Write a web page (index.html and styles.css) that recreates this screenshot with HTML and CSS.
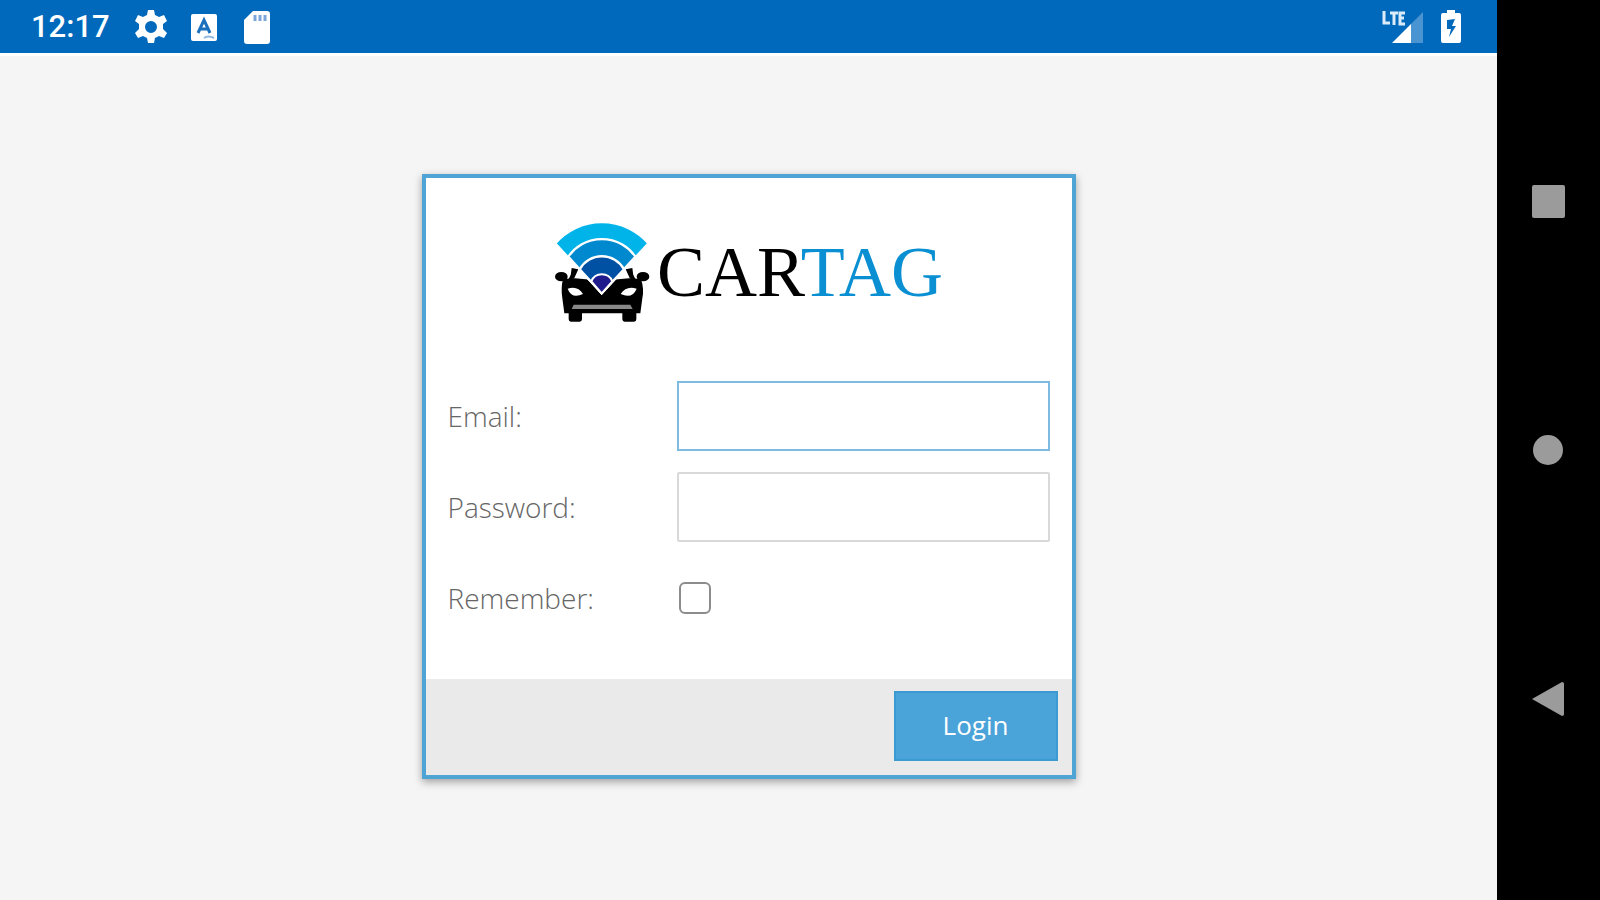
FILE: index.html
```html
<!DOCTYPE html>
<html lang="en">
<head>
    <meta charset="UTF-8">
    <meta name="viewport" content="width=device-width, initial-scale=1.0">
    <title>CarTag Login</title>
    <link rel="stylesheet" href="styles.css">
</head>
<body>
    <div class="screen">
        <header class="status-bar">
            <span class="time">12:17</span>
            <svg class="icon" viewBox="0 0 34 36">
                <path fill="#fff" fill-rule="evenodd" d="M14 1h6l1 5 4 2 5-2 3 6-4 3v5l4 4-3 5-5-2-4 2-1 5h-6l-1-5-4-2-5 2-3-5 4-4v-5l-4-3 3-6 5 2 4-2zM17 12a6 6 0 1 0 0 12a6 6 0 1 0 0-12z"/>
            </svg>
            <svg class="icon" viewBox="0 0 34 36">
                <rect x="4" y="5" width="26" height="27" rx="2" fill="#fff"/>
                <path d="M11 24l6-13 6 13M13 20h8" fill="none" stroke="#1b6fbd" stroke-width="3"/>
                <path d="M17 29q4-3 10 0" fill="none" stroke="#8db6e0" stroke-width="2"/>
            </svg>
            <svg class="icon" viewBox="0 0 34 36">
                <path fill="#fff" d="M13 2h14q3 0 3 3v27q0 3-3 3H7q-3 0-3-3V11z"/>
                <path stroke="#7ba6dc" stroke-width="3" d="M15 6v6M20 6v6M25 6v6"/>
            </svg>
            <div class="status-right">
                <svg class="signal" viewBox="0 0 42 36">
                    <path d="M3 2v12h6M9 4h8M13 4v12M24 4h-5v11h5M19 9h4" fill="none" stroke="#dcebfa" stroke-width="3"/>
                    <path fill="#fff" d="M11 34L30 15v19z"/>
                    <path fill="#4a94d2" d="M30 15L42 3v31H30z"/>
                </svg>
                <svg class="battery" viewBox="0 0 20 36">
                    <path fill="#fff" d="M6 1h8v3h4q2 0 2 2v26q0 2-2 2H2q-2 0-2-2V6q0-2 2-2h4z"/>
                    <path fill="#0069bb" d="M14 10l-8 1v9h4l-2 8 7-11h-4z"/>
                </svg>
            </div>
        </header>

        <main>
            <form class="login-card" action="#" method="post">
                <div class="logo">
                    <svg class="logo-mark" viewBox="45 36 291 300">
                        <path d="M106 188L78 236M272 188L300 236" stroke="#000" stroke-width="11"/>
                        <ellipse cx="67" cy="200" rx="19" ry="14"/>
                        <ellipse cx="312" cy="200" rx="19" ry="14"/>
                        <path d="M98 174l20 4-13 28-11-2zM280 174l-20 4 13 28 11-2z"/>
                        <path d="M72 207l36-2q80 10 162 0l36 2q10 30 4 58l-6 45H76l-6-45q-5-30 2-58z"/>
                        <path d="M89 300h40v28q0 7-7 7H96q-7 0-7-7zM250 300h42v28q0 7-7 7h-28q-7 0-7-7z"/>
                        <path d="M86 236q30-10 46 16-34 16-46-16zM293 236q-31-10-48 16 35 16 48-16z" fill="#fff"/>
                        <path d="M104 284h170l7 13H98z" fill="#888"/>
                        <path d="M188 250L50 100A184 184 0 0 1 327 100z" fill="#00b4ea" stroke="#fff" stroke-width="5"/>
                        <path d="M188 250L88 140A122 122 0 0 1 289 140z" fill="#0089cf" stroke="#fff" stroke-width="7"/>
                        <path d="M188 250L122 178A76 76 0 0 1 255 178z" fill="#0050a4" stroke="#fff" stroke-width="7"/>
                        <path d="M188 250L157 214A34 34 0 0 1 220 214z" fill="#201b8c" stroke="#fff" stroke-width="6"/>
                    </svg>
                    <span class="logo-text">CAR<span class="tag">TAG</span></span>
                </div>

                <div class="fields">
                    <div class="row">
                        <label for="email">Email:</label>
                        <input type="text" id="email" name="email" class="active">
                    </div>
                    <div class="row">
                        <label for="password">Password:</label>
                        <input type="password" id="password" name="password">
                    </div>
                    <div class="row">
                        <label for="remember">Remember:</label>
                        <input type="checkbox" id="remember" name="remember">
                    </div>
                </div>

                <div class="card-footer">
                    <button type="submit" class="login-btn">Login</button>
                </div>
            </form>
        </main>
    </div>

    <nav class="nav-bar">
        <button type="button" aria-label="Overview">
            <svg viewBox="0 0 42 42"><rect x="4" y="5" width="33" height="33" rx="2"/></svg>
        </button>
        <button type="button" aria-label="Home">
            <svg viewBox="0 0 42 42"><circle cx="20" cy="21" r="15"/></svg>
        </button>
        <button type="button" aria-label="Back">
            <svg viewBox="0 0 42 42"><path d="M4 21L34 4q2 0 2 2v30q0 2-2 2z"/></svg>
        </button>
    </nav>
</body>
</html>
```
FILE: styles.css
```css
* {
    box-sizing: border-box;
}

body {
    margin: 0;
    display: flex;
    min-height: 100vh;
    background-color: #f5f5f5;
    font-family: 'Open Sans', sans-serif;
}

.screen {
    flex: 1;
    display: flex;
    flex-direction: column;
}

/* status bar */
.status-bar {
    display: flex;
    align-items: center;
    gap: 19px;
    height: 53px;
    padding: 0 36px 0 31px;
    background-color: #0069bb;
    box-shadow: 0 3px 1px #fff;
}

.time {
    margin-right: 5px;
    color: #fff;
    font-family: Roboto, sans-serif;
    font-size: 31px;
    font-weight: 500;
}

.icon {
    width: 34px;
    height: 36px;
}

.status-right {
    display: flex;
    gap: 18px;
    margin-left: auto;
}

.signal {
    width: 42px;
    height: 36px;
}

.battery {
    width: 20px;
    height: 36px;
}

/* login card */
main {
    flex: 1;
    display: flex;
    justify-content: center;
    align-items: center;
}

.login-card {
    width: 100%;
    max-width: 654px;
    background-color: #fff;
    border: 4px solid #4fa4d6;
    box-shadow: 0 3px 8px rgba(0, 0, 0, 0.35);
}

.logo {
    display: flex;
    justify-content: center;
    align-items: center;
    gap: 6px;
    padding: 44px 0 59px;
}

.logo-mark {
    width: 97px;
    height: 100px;
}

.logo-text {
    color: #000;
    font-family: 'Liberation Serif', serif;
    font-size: 72px;
    line-height: 100px;
}

.tag {
    color: #0a90d2;
}

.fields {
    display: flex;
    flex-direction: column;
    gap: 21px;
    padding: 0 22px 46px;
}

.row {
    display: flex;
    align-items: center;
    height: 70px;
}

label {
    width: 229px;
    color: #666;
    font-size: 28px;
    font-weight: 300;
}

input[type="text"],
input[type="password"] {
    flex: 1;
    min-width: 0;
    height: 100%;
    padding: 0 16px;
    border: 2px solid #d9d9d9;
    border-radius: 2px;
    background-color: #fff;
    font-family: inherit;
    font-size: 28px;
    outline: none;
}

input[type="text"].active,
input:focus {
    border-color: #7fbbe0;
    border-radius: 0;
}

input[type="checkbox"] {
    appearance: none;
    width: 32px;
    height: 32px;
    margin: 0 2px;
    border: 2px solid #8c8c8c;
    border-radius: 6px;
    background-color: #fff;
}

input[type="checkbox"]:checked {
    background-color: #4aa3d9;
}

.card-footer {
    display: flex;
    justify-content: flex-end;
    padding: 12px 14px 14px;
    background-color: #eaeaea;
}

.login-btn {
    width: 164px;
    height: 70px;
    padding: 0 0 2px;
    border: 2px solid #3c9ad3;
    background-color: #4aa3d9;
    color: #fff;
    font-family: inherit;
    font-size: 26px;
    cursor: pointer;
}

/* device buttons */
.nav-bar {
    display: flex;
    flex-direction: column;
    justify-content: space-between;
    align-items: center;
    width: 103px;
    padding: 20vh 0;
    background-color: #000;
}

.nav-bar button {
    width: 42px;
    height: 42px;
    padding: 0;
    border: none;
    background: none;
    cursor: pointer;
}

.nav-bar svg {
    display: block;
    fill: #9b9b9b;
}
```
